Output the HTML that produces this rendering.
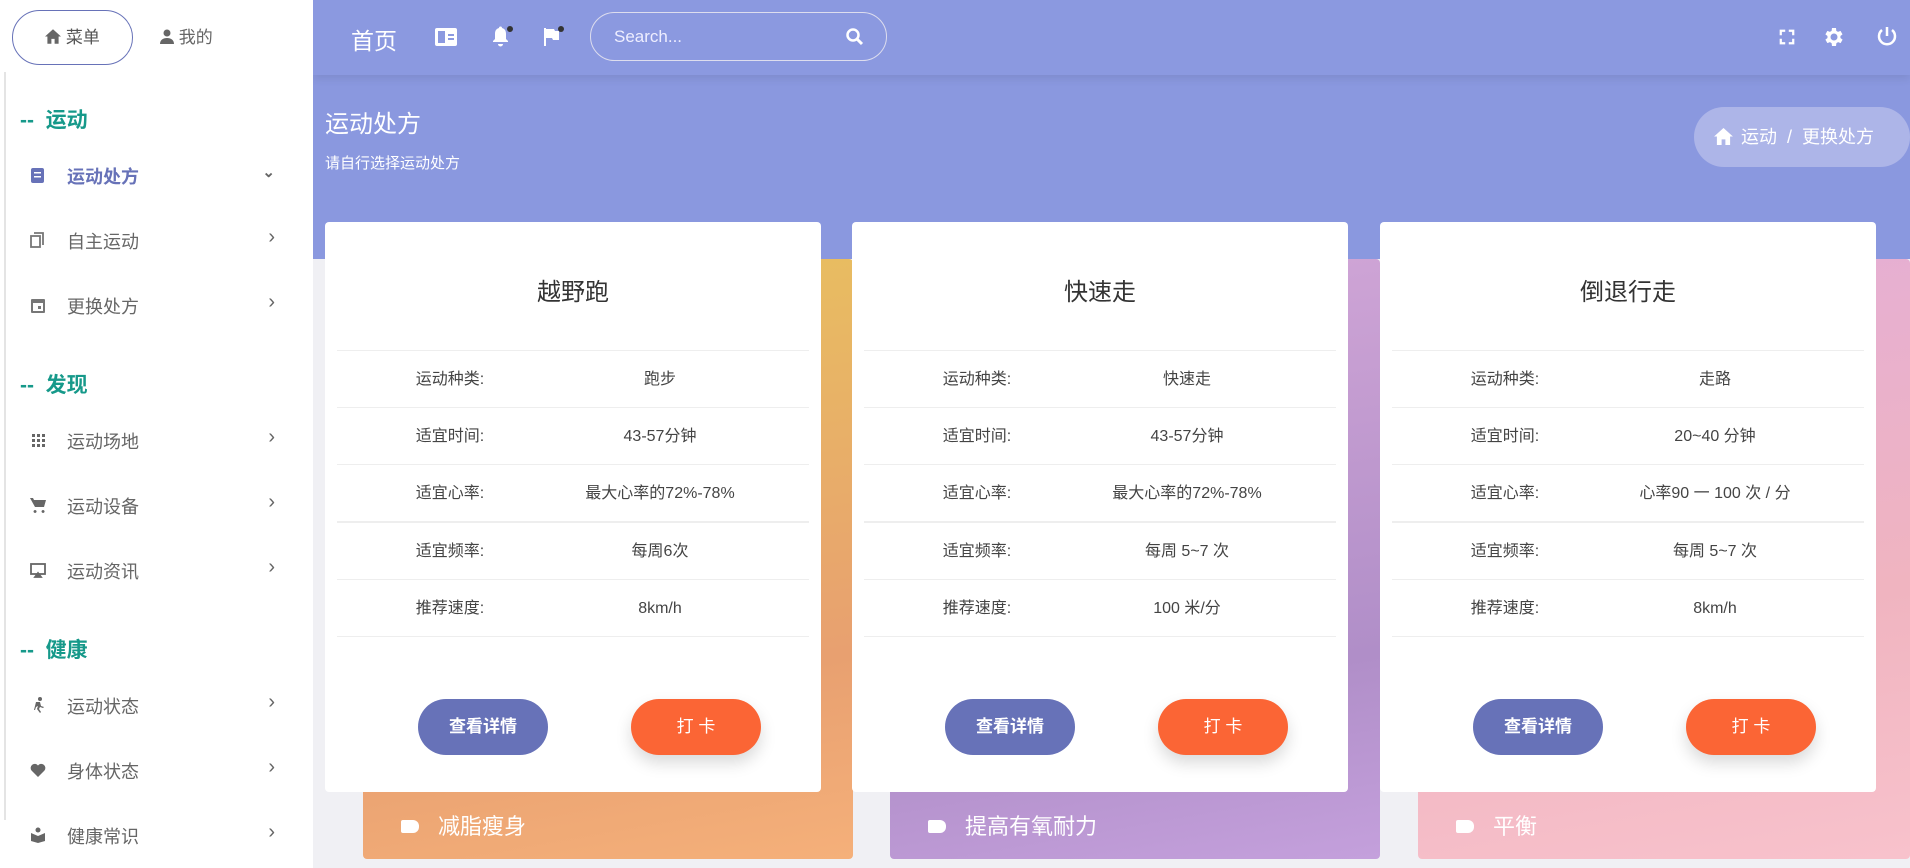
<!DOCTYPE html>
<html><head><meta charset="utf-8"><style>
*{box-sizing:border-box;margin:0;padding:0}
body{width:1910px;height:868px;overflow:hidden;background:#f0f0f4;font-family:"Liberation Sans","Noto Sans CJK SC",sans-serif;position:relative}
.top{position:absolute;left:313px;top:0;width:1597px;height:75px;background:#8b99e0;box-shadow:0 4px 8px rgba(0,0,0,.08);z-index:3}
.hdr{position:absolute;left:313px;top:75px;width:1597px;height:184px;background:#8a98df}
.side{position:absolute;left:0;top:0;width:313px;height:868px;background:#fff;z-index:4}
.side .bl{position:absolute;left:4px;top:72px;width:2px;height:748px;background:#e4e4e4}
.tab1{position:absolute;left:12px;top:10px;width:121px;height:55px;border:1px solid #6772b8;border-radius:28px;color:#555;font-size:17px;line-height:53px;text-align:center}
.tab2{position:absolute;left:160px;top:10px;color:#666;font-size:17px;line-height:55px}
.sec{position:absolute;left:20px;color:#16998a;font-weight:bold;font-size:21px}
.it{position:absolute;left:30px;width:245px;font-size:18px;color:#666}
.it .ic{position:absolute;left:0;top:4px;width:16px;height:16px}
.it .t{position:absolute;left:37px}
.it .ar{position:absolute;right:0;top:-2px;color:#666;font-size:20px}
.card{position:absolute;top:222px;width:496px;height:570px;background:#fff;border-radius:4px;z-index:2}
.card .title{position:absolute;top:50px;width:100%;text-align:center;font-size:24px;color:#333}
.row{position:absolute;left:12px;right:12px;height:57px;border-top:1px solid #eee;font-size:16px;color:#444;line-height:57px}
.row .l{position:absolute;left:63px;width:100px;text-align:center}
.row .v{position:absolute;left:223px;width:200px;text-align:center}
.rowlast{position:absolute;left:12px;right:12px;top:414px;border-top:1px solid #eee}
.b1,.b2{position:absolute;top:477px;width:130px;height:56px;border-radius:28px;color:#fff;text-align:center;line-height:56px;font-size:17px}
.b1{left:93px;background:#6772b8;font-weight:bold}
.b2{left:306px;background:#fb6535;box-shadow:0 8px 16px rgba(0,0,0,.15)}
.pan{position:absolute;top:259px;width:490px;height:600px;border-radius:4px;z-index:1}
.pan span{position:absolute;left:75px;bottom:18px;color:#fff;font-size:22px}
.pan i{position:absolute;left:38px;bottom:26px;width:18px;height:13px;background:#fff;border-radius:2px 6px 6px 2px}
</style></head><body>
<div class="top">
 <div style="position:absolute;left:38px;top:22px;color:#fff;font-size:23px">首页</div>
 <svg style="position:absolute;left:122px;top:28px" width="22" height="18" viewBox="0 0 22 18"><rect x="0" y="0" width="22" height="18" rx="2" fill="#fff"/><rect x="3" y="3" width="7" height="12" fill="#8b99e0"/><rect x="13" y="6" width="6" height="2" fill="#8b99e0"/><rect x="13" y="10" width="6" height="2" fill="#8b99e0"/></svg>
 <svg style="position:absolute;left:177px;top:25px" width="24" height="24" viewBox="0 0 24 24"><path d="M9 3a1.5 1.5 0 0 1 3 0c3 .8 4 3 4 6v5l2 2v1H3v-1l2-2V9c0-3 1-5.2 4-6zM8 19h5a2.5 2.5 0 0 1-5 0z" fill="#fff"/><circle cx="20" cy="4" r="3" fill="#333"/></svg>
 <svg style="position:absolute;left:228px;top:25px" width="24" height="24" viewBox="0 0 24 24"><path d="M3 3h2v18H3zM5 4h8l1 2h4v9h-6l-1-2H5z" fill="#fff"/><circle cx="20" cy="4" r="3" fill="#333"/></svg>
 <div style="position:absolute;left:277px;top:12px;width:297px;height:49px;border:1px solid #dde;border-radius:25px"><span style="position:absolute;left:23px;top:14px;color:#eef;font-size:17px">Search...</span><svg style="position:absolute;left:254px;top:14px" width="20" height="20" viewBox="0 0 20 20"><circle cx="8" cy="8" r="5.5" stroke="#fff" stroke-width="2.5" fill="none"/><path d="M12 12l5 5" stroke="#fff" stroke-width="3"/></svg></div>
 <svg style="position:absolute;left:1466px;top:29px" width="16" height="16" viewBox="0 0 18 18" fill="none" stroke="#fff" stroke-width="2.5"><path d="M2 7V2h5M11 2h5v5M16 11v5h-5M7 16H2v-5"/></svg>
 <svg style="position:absolute;left:1508px;top:25px" width="24" height="24" viewBox="0 0 24 24"><path fill="#fff" d="M19.4 13a7.5 7.5 0 0 0 0-2l2.1-1.6-2-3.5-2.5 1a7.6 7.6 0 0 0-1.7-1L15 3h-4l-.4 2.9a7.6 7.6 0 0 0-1.7 1l-2.5-1-2 3.5L6.5 11a7.5 7.5 0 0 0 0 2l-2.1 1.6 2 3.5 2.5-1a7.6 7.6 0 0 0 1.7 1L11 21h4l.4-2.9a7.6 7.6 0 0 0 1.7-1l2.5 1 2-3.5zM13 15.5a3.5 3.5 0 1 1 0-7 3.5 3.5 0 0 1 0 7z"/></svg>
 <svg style="position:absolute;left:1562px;top:25px" width="24" height="24" viewBox="0 0 24 24" fill="none" stroke="#fff" stroke-width="2.5"><path d="M12 2v9M7 5a8 8 0 1 0 10 0"/></svg>
</div>
<div class="hdr">
 <div style="position:absolute;left:12px;top:29px;color:#fff;font-size:24px">运动处方</div>
 <div style="position:absolute;left:12px;top:77px;color:#fff;font-size:15px">请自行选择运动处方</div>
 <div style="position:absolute;left:1381px;top:32px;width:216px;height:60px;background:#adb5e8;border-radius:30px;color:#fff;font-size:18px;line-height:60px;padding-left:47px">
  <svg style="position:absolute;left:20px;top:21px" width="19" height="17" viewBox="0 0 20 18"><path d="M10 0L0 9h3v9h5v-6h4v6h5V9h3z" fill="#fff"/></svg>运动 &nbsp;/&nbsp; 更换处方</div>
</div>
<div class="side">
 <div class="bl"></div>
 <div class="tab1"><svg width="16" height="15" viewBox="0 0 20 18" style="vertical-align:-1px"><path d="M10 0L0 9h3v9h5v-6h4v6h5V9h3z" fill="#666"/></svg> 菜单</div>
 <div class="tab2"><svg width="14" height="15" viewBox="0 0 14 15" style="vertical-align:-1px"><circle cx="7" cy="4" r="3.5" fill="#666"/><path d="M0 15c0-4 3-6 7-6s7 2 7 6z" fill="#666"/></svg> 我的</div>
 <div class="sec" style="top:104px">-- &nbsp;运动</div>
 <div class="it" style="top:163px;color:#6772b8;font-weight:bold"><svg class="ic" viewBox="0 0 16 16"><rect x="1" y="1" width="13" height="15" rx="2" fill="#6772b8"/><rect x="4" y="5" width="7" height="1.5" fill="#fff"/><rect x="4" y="9" width="7" height="1.5" fill="#fff"/></svg><span class="t">运动处方</span><span class="ar" style="color:#666;font-size:15px;top:0">&#8964;</span></div>
 <div class="it" style="top:228px"><svg class="ic" viewBox="0 0 16 16" fill="none" stroke="#777" stroke-width="1.8"><path d="M4 1h9v12"/><rect x="1" y="4" width="9" height="11"/></svg><span class="t">自主运动</span><span class="ar">&#8250;</span></div>
 <div class="it" style="top:293px"><svg class="ic" viewBox="0 0 16 16"><rect x="1" y="2" width="14" height="14" rx="1" fill="#777"/><rect x="3" y="6" width="10" height="8" fill="#fff"/><rect x="8" y="9" width="3" height="3" fill="#777"/></svg><span class="t">更换处方</span><span class="ar">&#8250;</span></div>
 <div class="sec" style="top:369px">-- &nbsp;发现</div>
 <div class="it" style="top:428px"><svg class="ic" viewBox="0 0 16 16" fill="#666"><rect x="2" y="2" width="3" height="3"/><rect x="7" y="2" width="3" height="3"/><rect x="12" y="2" width="3" height="3"/><rect x="2" y="7" width="3" height="3"/><rect x="7" y="7" width="3" height="3"/><rect x="12" y="7" width="3" height="3"/><rect x="2" y="12" width="3" height="3"/><rect x="7" y="12" width="3" height="3"/><rect x="12" y="12" width="3" height="3"/></svg><span class="t">运动场地</span><span class="ar">&#8250;</span></div>
 <div class="it" style="top:493px"><svg class="ic" viewBox="0 0 16 16" fill="#666"><path d="M0 1h3l1 2h12l-2 7H5zM5 13a1.5 1.5 0 1 0 .1 0zM13 13a1.5 1.5 0 1 0 .1 0z"/></svg><span class="t">运动设备</span><span class="ar">&#8250;</span></div>
 <div class="it" style="top:558px"><svg class="ic" viewBox="0 0 16 16" fill="none" stroke="#666" stroke-width="1.8"><rect x="1" y="2" width="14" height="10"/><path d="M5 15l3-4 3 4z" fill="#666"/></svg><span class="t">运动资讯</span><span class="ar">&#8250;</span></div>
 <div class="sec" style="top:634px">-- &nbsp;健康</div>
 <div class="it" style="top:693px"><svg class="ic" viewBox="0 0 16 16" fill="#666"><circle cx="10" cy="2" r="2"/><path d="M6 5l4 0 1 4 3 1-1 1-3-1-1 2 2 3-1 1-3-4 1-3-2 1-1 3-1 0 1-4z"/></svg><span class="t">运动状态</span><span class="ar">&#8250;</span></div>
 <div class="it" style="top:758px"><svg class="ic" viewBox="0 0 16 16" fill="#666"><path d="M8 15L1.5 8.5A4 4 0 0 1 8 3.5a4 4 0 0 1 6.5 5z"/></svg><span class="t">身体状态</span><span class="ar">&#8250;</span></div>
 <div class="it" style="top:823px"><svg class="ic" viewBox="0 0 16 16" fill="#666"><circle cx="8" cy="3" r="2.5"/><path d="M1 6l7 3 7-3v8l-7 2-7-2z"/></svg><span class="t">健康常识</span><span class="ar">&#8250;</span></div>
</div>

<div class="pan" style="left:363px;background:linear-gradient(170deg,#e8c25e,#e8a070 70%,#f5b07a)"><i></i><span>减脂瘦身</span></div>
<div class="pan" style="left:890px;background:linear-gradient(170deg,#d4a8d8,#b08ec8 70%,#c4a0dc)"><i></i><span>提高有氧耐力</span></div>
<div class="pan" style="left:1418px;width:492px;background:linear-gradient(170deg,#e4aed6,#f0b4c0 60%,#f8c2cc)"><i></i><span>平衡</span></div>

<div class="card" style="left:325px">
 <div class="title">越野跑</div>
 <div class="row" style="top:128px"><span class="l">运动种类:</span><span class="v">跑步</span></div>
 <div class="row" style="top:185px"><span class="l">适宜时间:</span><span class="v">43-57分钟</span></div>
 <div class="row" style="top:242px"><span class="l">适宜心率:</span><span class="v">最大心率的72%-78%</span></div>
 <div class="row" style="top:299px;border-top-width:2px"><span class="l">适宜频率:</span><span class="v">每周6次</span></div>
 <div class="row" style="top:357px"><span class="l">推荐速度:</span><span class="v">8km/h</span></div>
 <div class="rowlast"></div>
 <div class="b1">查看详情</div><div class="b2">打 卡</div>
</div>
<div class="card" style="left:852px">
 <div class="title">快速走</div>
 <div class="row" style="top:128px"><span class="l">运动种类:</span><span class="v">快速走</span></div>
 <div class="row" style="top:185px"><span class="l">适宜时间:</span><span class="v">43-57分钟</span></div>
 <div class="row" style="top:242px"><span class="l">适宜心率:</span><span class="v">最大心率的72%-78%</span></div>
 <div class="row" style="top:299px;border-top-width:2px"><span class="l">适宜频率:</span><span class="v">每周 5~7 次</span></div>
 <div class="row" style="top:357px"><span class="l">推荐速度:</span><span class="v">100 米/分</span></div>
 <div class="rowlast"></div>
 <div class="b1">查看详情</div><div class="b2">打 卡</div>
</div>
<div class="card" style="left:1380px">
 <div class="title">倒退行走</div>
 <div class="row" style="top:128px"><span class="l">运动种类:</span><span class="v">走路</span></div>
 <div class="row" style="top:185px"><span class="l">适宜时间:</span><span class="v">20~40 分钟</span></div>
 <div class="row" style="top:242px"><span class="l">适宜心率:</span><span class="v">心率90 一 100 次 / 分</span></div>
 <div class="row" style="top:299px;border-top-width:2px"><span class="l">适宜频率:</span><span class="v">每周 5~7 次</span></div>
 <div class="row" style="top:357px"><span class="l">推荐速度:</span><span class="v">8km/h</span></div>
 <div class="rowlast"></div>
 <div class="b1">查看详情</div><div class="b2">打 卡</div>
</div>
</body></html>
